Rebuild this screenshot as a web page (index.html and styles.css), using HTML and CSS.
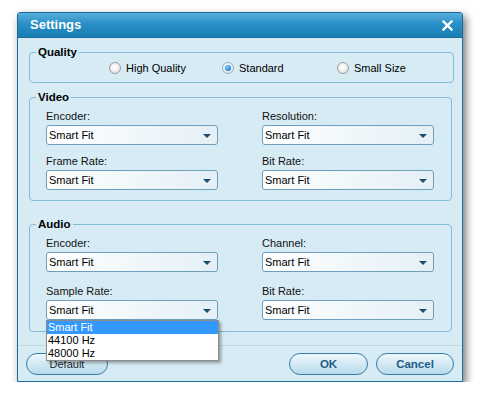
FILE: index.html
```html
<!DOCTYPE html>
<html>
<head>
<meta charset="utf-8">
<link rel="stylesheet" href="styles.css">
</head>
<body>
<div class="window">
  <div class="titlebar">
    <span class="title">Settings</span>
    <svg class="close" width="11" height="11" viewBox="0 0 11 11"><path d="M1.5 1.5 L9.5 9.5 M9.5 1.5 L1.5 9.5" stroke="#fff" stroke-width="2.4" stroke-linecap="square"/></svg>
  </div>
  <div class="content">
    <fieldset class="group quality">
      <legend>Quality</legend>
      <div class="radios">
        <label class="opt"><span class="radio"></span>High Quality</label>
        <label class="opt"><span class="radio checked"></span>Standard</label>
        <label class="opt"><span class="radio"></span>Small Size</label>
      </div>
    </fieldset>
    <fieldset class="group video">
      <legend>Video</legend>
      <div class="grid">
        <div class="field"><div class="lbl">Encoder:</div><div class="select">Smart Fit<span class="arrow"></span></div></div>
        <div class="field"><div class="lbl">Resolution:</div><div class="select">Smart Fit<span class="arrow"></span></div></div>
        <div class="field"><div class="lbl">Frame Rate:</div><div class="select">Smart Fit<span class="arrow"></span></div></div>
        <div class="field"><div class="lbl">Bit Rate:</div><div class="select">Smart Fit<span class="arrow"></span></div></div>
      </div>
    </fieldset>
    <fieldset class="group audio">
      <legend>Audio</legend>
      <div class="grid">
        <div class="field"><div class="lbl">Encoder:</div><div class="select">Smart Fit<span class="arrow"></span></div></div>
        <div class="field"><div class="lbl">Channel:</div><div class="select">Smart Fit<span class="arrow"></span></div></div>
        <div class="field"><div class="lbl">Sample Rate:</div><div class="select open">Smart Fit<span class="arrow"></span>
          <ul class="list">
            <li class="sel">Smart Fit</li>
            <li>44100 Hz</li>
            <li>48000 Hz</li>
          </ul>
        </div></div>
        <div class="field"><div class="lbl">Bit Rate:</div><div class="select">Smart Fit<span class="arrow"></span></div></div>
      </div>
    </fieldset>
    <div class="footer">
      <button class="btn default">Default</button>
      <div class="right">
        <button class="btn strong ok">OK</button>
        <button class="btn strong cancel">Cancel</button>
      </div>
    </div>
  </div>
</div>
</body>
</html>
```

FILE: styles.css
```css
html, body {
  margin: 0;
  padding: 0;
  background: #ffffff;
}
body {
  font-family: "Liberation Sans", Arial, sans-serif;
  font-size: 11px;
  color: #000;
}
.window {
  box-sizing: border-box;
  width: 446px;
  margin: 12px 0 0 17px;
  border: 1px solid #1d6c9a;
  border-radius: 3px 3px 0 0;
  background: #d7ebf5;
  box-shadow: 3px 4px 8px rgba(0, 0, 0, 0.55);
}
.titlebar {
  height: 24px;
  display: flex;
  align-items: center;
  justify-content: space-between;
  padding: 0 9px 0 12px;
  background: linear-gradient(#58aedb, #2a8fc6 45%, #1a7db5);
  border-bottom: 1px solid #1b6e9f;
  border-radius: 2px 2px 0 0;
}
.title {
  color: #fff;
  font-weight: bold;
  font-size: 13px;
  line-height: 24px;
}
.close {
  display: block;
}
.content {
  padding: 7px 0 6px;
}
.group {
  margin: 0 10px 0 11px;
  padding: 0 16px;
  border: 1px solid #83bdd3;
  border-radius: 4px;
}
.group legend {
  font-weight: bold;
  font-size: 11.5px;
  line-height: 14px;
  padding: 0 2px;
  margin-left: -10px;
}
.quality {
  padding-top: 2px;
  padding-bottom: 7px;
}
.radios {
  display: grid;
  grid-template-columns: 113px 115px 100px;
  padding-left: 63px;
}
.opt {
  display: flex;
  align-items: center;
  gap: 5px;
  height: 14px;
  font-size: 11px;
}
.radio {
  box-sizing: border-box;
  width: 12px;
  height: 12px;
  border-radius: 50%;
  border: 1px solid #9c9c9c;
  background: radial-gradient(circle at 45% 40%, #ffffff 0%, #ececec 55%, #d4d4d4 100%);
  display: flex;
  align-items: center;
  justify-content: center;
}
.radio.checked {
  border-color: #8fb2cc;
}
.radio.checked::after {
  content: "";
  width: 6px;
  height: 6px;
  border-radius: 50%;
  background: radial-gradient(circle at 40% 35%, #8fd0ff, #2b86e0 60%, #1866c4);
}
.video {
  margin-top: 7px;
  padding-top: 5px;
  padding-bottom: 10px;
}
.audio {
  margin-top: 16px;
  padding-top: 5px;
  padding-bottom: 11px;
}
.grid {
  display: grid;
  grid-template-columns: 172px 172px;
  column-gap: 44px;
  row-gap: 9px;
}
.audio .grid {
  row-gap: 12px;
}
.lbl {
  line-height: 14px;
  margin-bottom: 2px;
  color: #111;
}
.select {
  position: relative;
  box-sizing: border-box;
  height: 20px;
  border: 1px solid #6f9fbd;
  border-radius: 3px;
  background: linear-gradient(to right, #ffffff, #eef6fa 60%, #e4f0f6);
  padding-left: 2px;
  line-height: 18px;
  font-size: 11px;
}
.arrow {
  position: absolute;
  right: 6px;
  top: 8px;
  width: 0;
  height: 0;
  border-left: 4px solid transparent;
  border-right: 4px solid transparent;
  border-top: 4px solid #1d4d6c;
}
.list {
  position: absolute;
  z-index: 5;
  left: -1px;
  top: 19px;
  width: 173px;
  box-sizing: border-box;
  margin: 0;
  padding: 0;
  list-style: none;
  background: #fff;
  border: 1px solid #8c8c8c;
  box-shadow: 2px 2px 3px rgba(0, 0, 0, 0.35);
}
.list li {
  line-height: 13px;
  padding-left: 1px;
  font-size: 11px;
  color: #000;
}
.list li.sel {
  background: #3399ff;
  color: #fff;
}
.footer {
  margin-top: 13px;
  border-top: 1px solid #c4d8e2;
  padding: 7px 8px 0 8px;
  display: flex;
  justify-content: space-between;
}
.right {
  display: flex;
  gap: 8px;
}
.btn {
  font-family: "Liberation Sans", Arial, sans-serif;
  height: 22px;
  border: 1px solid #3a7ea8;
  border-radius: 11px;
  background: linear-gradient(#ecf6fb, #d3e9f4 50%, #b8dbeb);
  font-size: 11px;
  color: #1e2a33;
  padding: 0;
  margin: 0;
}
.default {
  width: 82px;
}
.strong {
  font-weight: bold;
  font-size: 11.5px;
  color: #1c5c86;
}
.ok {
  width: 79px;
}
.cancel {
  width: 78px;
}
```
